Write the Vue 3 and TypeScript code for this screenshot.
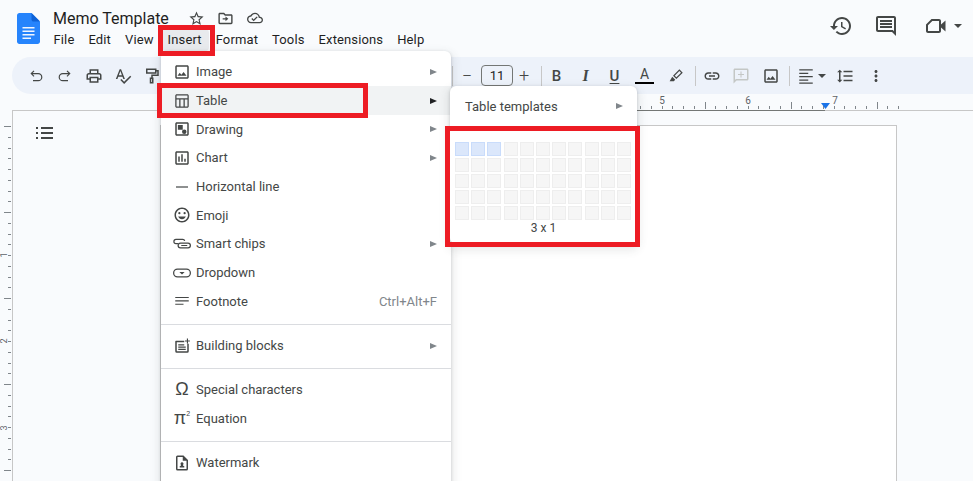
<template>
  <div class="docs">
    <header class="topbar">
      <svg class="logo" width="23" height="31" viewBox="0 0 23 31">
        <path d="M14.5 0H2.4C1.1 0 0 1.1 0 2.4v26.2C0 29.9 1.1 31 2.4 31h18.2c1.3 0 2.4-1.1 2.4-2.4V8.5z" fill="#2684fc" />
        <path d="M14.5 0v6.4c0 1.2.9 2.1 2.1 2.1H23z" fill="#0f62d6" />
        <path d="M5.5 14h12v1.5h-12zM5.5 17.5h12V19h-12zM5.5 21h12v1.5h-12zM5.5 24.500h8.500V26H5.500z" fill="#f1f5fe" />
      </svg>
      <div class="titles">
        <div class="title-row">
          <span class="doc-title">Memo Template</span>
          <svg class="ti" viewBox="0 0 24 24"><path :d="icons.star" /></svg>
          <svg class="ti" viewBox="0 0 24 24"><path :d="icons.folder" /></svg>
          <svg class="ti cloud" viewBox="0 0 24 24"><path :d="icons.cloud" /></svg>
        </div>
        <nav class="menubar">
          <span v-for="m in menus" :key="m" class="menubar-item" :class="{ active: m === 'Insert' }">{{ m }}</span>
        </nav>
      </div>
      <div class="top-actions">
        <svg class="action" viewBox="0 0 24 24"><path :d="icons.history" /></svg>
        <svg class="action comment" viewBox="0 0 24 24"><path :d="icons.comment" /></svg>
        <div class="meet">
          <svg class="action" viewBox="0 0 24 24"><path :d="icons.video" /></svg>
          <i class="caret"></i>
        </div>
      </div>
    </header>

    <div class="toolbar">
      <div class="tool-group">
        <svg v-for="t in leftTools" :key="t" class="tool" viewBox="0 0 24 24"><path :d="icons[t]" /></svg>
      </div>
      <div class="tool-group right">
        <span class="sep"></span>
        <span class="size-btn minus">−</span>
        <span class="size-box">11</span>
        <span class="size-btn">+</span>
        <span class="sep s2"></span>
        <span class="fmt bold">B</span>
        <span class="fmt italic">I</span>
        <span class="fmt under">U</span>
        <span class="fmt color">A</span>
        <svg class="tool pen" viewBox="0 0 24 24"><path :d="icons.pen" /></svg>
        <span class="sep s3"></span>
        <svg class="tool first" viewBox="0 0 24 24"><path :d="icons.link" /></svg>
        <svg class="tool muted" viewBox="0 0 24 24"><path :d="icons.addComment" /></svg>
        <svg class="tool wide" viewBox="0 0 24 24"><path :d="icons.image" /></svg>
        <span class="sep s4"></span>
        <svg class="tool first" viewBox="0 0 24 24"><path :d="icons.align" /></svg>
        <i class="caret small"></i>
        <svg class="tool spacing" viewBox="0 0 24 24"><path :d="icons.spacing" /></svg>
        <svg class="tool more" viewBox="0 0 24 24"><path :d="icons.more" /></svg>
      </div>
    </div>

    <svg class="hruler" width="973" height="17" viewBox="0 0 973 17">
      <line
        v-for="t in topTicks"
        :key="t.x"
        :x1="t.x + 0.5"
        :x2="t.x + 0.5"
        :y1="t.big ? 8 : 12"
        y2="15"
        stroke="#80868b"
      />
      <text x="662" y="10">5</text>
      <text x="748" y="10">6</text>
      <text x="835" y="10">7</text>
      <line x1="12" x2="973" y1="16.500" y2="16.500" stroke="#c7c7c7" />
      <line x1="630" x2="825" y1="16.500" y2="16.500" stroke="#747775" />
      <path d="M821 9h9l-4.500 6z" fill="#1a73e8" />
    </svg>

    <div class="workspace">
      <svg class="vruler" width="12" height="370" viewBox="0 0 12 370">
        <line
          v-for="t in sideTicks"
          :key="t.y"
          :x1="t.big ? 4 : 8"
          x2="11"
          :y1="t.y + 0.5"
          :y2="t.y + 0.5"
          stroke="#80868b"
        />
        <text transform="translate(7 144) rotate(-90)">1</text>
        <text transform="translate(7 230) rotate(-90)">2</text>
        <text transform="translate(7 317) rotate(-90)">3</text>
      </svg>
      <div class="canvas">
        <svg class="outline" width="17" height="14" viewBox="0 0 17 14">
          <path d="M0 1h2v2H0zM0 6h2v2H0zM0 11h2v2H0zM5 1h12v2H5zM5 6h12v2H5zM5 11h12v2H5z" fill="#444746" />
        </svg>
        <div class="page"></div>
      </div>
    </div>

    <div class="menu">
      <template v-for="(item, i) in items" :key="i">
        <div v-if="item.divider" class="divider"></div>
        <div v-else class="row" :class="{ hover: item.label === 'Table' }">
          <span v-if="item.glyph" class="glyph" :class="item.glyphClass">{{ item.glyph }}<sup v-if="item.glyphClass === 'pi'">2</sup></span>
          <svg v-else class="row-icon" viewBox="0 0 24 24"><path :d="icons[item.icon ?? '']" fill-rule="evenodd" /></svg>
          <span class="label">{{ item.label }}</span>
          <span v-if="item.shortcut" class="shortcut">{{ item.shortcut }}</span>
          <i v-if="item.sub" class="arrow"></i>
        </div>
      </template>
    </div>

    <div class="submenu">
      <div class="row templates">
        <span class="label">Table templates</span>
        <i class="arrow"></i>
      </div>
      <div class="grid">
        <span v-for="n in 55" :key="n" class="cell" :class="{ on: n <= 3 }"></span>
      </div>
      <div class="grid-size">3 x 1</div>
    </div>

    <div class="mark mark-insert"></div>
    <div class="mark mark-table"></div>
    <div class="mark mark-grid"></div>
  </div>
</template>

<script setup lang="ts">
interface MenuItem {
  label?: string
  icon?: string
  glyph?: string
  glyphClass?: string
  shortcut?: string
  sub?: boolean
  divider?: boolean
}

const menus = ['File', 'Edit', 'View', 'Insert', 'Format', 'Tools', 'Extensions', 'Help']
const leftTools = ['undo', 'redo', 'print', 'spell', 'paint']

const icons: Record<string, string> = {
  star: 'M22 9.24l-7.19-.62L12 2 9.190 8.630 2 9.240l5.460 4.730L5.820 21 12 17.270 18.180 21l-1.630-7.030L22 9.240zM12 15.400l-3.760 2.270 1-4.280-3.320-2.880 4.380-.380L12 6.100l1.710 4.040 4.380.380-3.320 2.880 1 4.280L12 15.400z',
  folder: 'M20 6h-8l-2-2H4c-1.100 0-2 .9-2 2v12c0 1.100.9 2 2 2h16c1.100 0 2-.9 2-2V8c0-1.100-.9-2-2-2zm0 12H4V6h5.170l2 2H20v10zM12 11.500H8v2h4V16l4-3.500L12 9z',
  cloud: 'M19.350 10.040C18.670 6.590 15.640 4 12 4 9.110 4 6.600 5.640 5.350 8.040 2.340 8.360 0 10.910 0 14c0 3.310 2.690 6 6 6h13c2.760 0 5-2.240 5-5 0-2.640-2.050-4.780-4.650-4.960zM19 18H6c-2.210 0-4-1.790-4-4 0-2.050 1.530-3.760 3.560-3.970l1.070-.11.5-.95C8.080 7.140 9.940 6 12 6c2.620 0 4.880 1.860 5.390 4.430l.3 1.500 1.530.11c1.560.1 2.780 1.410 2.780 2.960 0 1.650-1.350 3-3 3zm-9-3.820l-2.090-2.090L6.500 13.500 10 17l6.010-6.010-1.410-1.410z',
  history: 'M13 3c-4.970 0-9 4.030-9 9H1l3.890 3.890.07.14L9 12H6c0-3.870 3.130-7 7-7s7 3.130 7 7-3.130 7-7 7c-1.930 0-3.680-.79-4.940-2.060l-1.420 1.420C8.270 19.990 10.510 21 13 21c4.970 0 9-4.030 9-9s-4.030-9-9-9zm-1 5v5l4.280 2.540.72-1.210-3.500-2.080V8H12z',
  comment: 'M21.990 4c0-1.100-.89-2-1.990-2H4c-1.100 0-2 .9-2 2v12c0 1.100.9 2 2 2h14l4 4-.01-18zM20 4v13.170L18.830 16H4V4h16zM6 12h12v2H6zm0-3h12v2H6zm0-3h12v2H6z',
  video: 'M7.500 5H15c1.100 0 2 .9 2 2v3.500l4.500-4v11l-4.500-4V17c0 1.100-.9 2-2 2H4c-1.100 0-2-.9-2-2v-6.500zM8.300 7L4 11.300V17h11V7z',
  undo: 'M8.800 4.600l1.100 1.100L7.600 8H15a5.500 5.500 0 0 1 0 11H8v-1.600h7a3.900 3.900 0 0 0 0-7.800H7.600l2.300 2.300-1.100 1.100L4.600 8.800z',
  redo: 'M15.200 4.600l-1.100 1.100L16.400 8H9a5.500 5.500 0 0 0 0 11h7v-1.600H9a3.900 3.900 0 0 1 0-7.800h7.400l-2.300 2.300 1.100 1.100 4.200-4.200z',
  print: 'M19 8h-1V3H6v5H5c-1.660 0-3 1.340-3 3v6h4v4h12v-4h4v-6c0-1.660-1.340-3-3-3zM8 5h8v3H8V5zm8 12v2H8v-4h8v2zm2-2v-2H6v2H4v-4c0-.55.45-1 1-1h14c.55 0 1 .45 1 1v4h-2z',
  spell: 'M12.450 16h2.090L9.430 3H7.570L2.460 16h2.090l1.120-3h5.640l1.140 3zm-6.020-5L8.500 5.480 10.570 11H6.430zm15.160.59l-8.090 8.090L9.830 16l-1.410 1.410 5.090 5.090L23 13l-1.410-1.410z',
  paint: 'M4 2h14v2h3v8h-8v2h1v8H9v-8h2v-4h8V6h-1v3H4zM6 4v3h10V4zM11 16v4h1v-4z',
  pen: 'M16.500 3l4.500 4.500-8.500 8.500-4.500-4.500zM16.500 5.300L10.300 11.500l2.200 2.200 6.200-6.200zM7 13l4 4-2 2H3.500z',
  link: 'M3.900 12c0-1.710 1.390-3.100 3.100-3.100h4V7H7c-2.760 0-5 2.240-5 5s2.240 5 5 5h4v-1.900H7c-1.710 0-3.100-1.390-3.100-3.100zM8 13h8v-2H8v2zm9-6h-4v1.900h4c1.710 0 3.100 1.390 3.100 3.100s-1.390 3.100-3.100 3.100h-4V17h4c2.760 0 5-2.240 5-5s-2.240-5-5-5z',
  addComment: 'M20 2H4c-1.100 0-2 .9-2 2v18l4-4h14c1.100 0 2-.9 2-2V4c0-1.100-.9-2-2-2zm0 14H5.170L4 17.170V4h16v12zM11.300 6h1.400v3.300H16v1.400h-3.300V14h-1.400v-3.300H8V9.300h3.300z',
  image: 'M19 5v14H5V5h14m0-2H5c-1.100 0-2 .9-2 2v14c0 1.100.9 2 2 2h14c1.100 0 2-.9 2-2V5c0-1.100-.9-2-2-2zm-4.860 8.860l-3 3.870L9 13.140 6 17h12l-3.860-5.140z',
  align: 'M3 3h18v1.800H3zM3 7.500h12v1.800H3zM3 12h18v1.800H3zM3 16.500h12v1.800H3zM3 20.500h18v1.800H3z',
  spacing: 'M6 7h2.500L5 3.500 1.500 7H4v10H1.500L5 20.500 8.500 17H6V7zm4-2v2h12V5H10zm0 14h12v-2H10v2zm0-6h12v-2H10v2z',
  more: 'M12 8c1.100 0 2-.9 2-2s-.9-2-2-2-2 .9-2 2 .9 2 2 2zm0 2c-1.100 0-2 .9-2 2s.9 2 2 2 2-.9 2-2-.9-2-2-2zm0 6c-1.100 0-2 .9-2 2s.9 2 2 2 2-.9 2-2-.9-2-2-2z',
  table: 'M5 3h14c1.100 0 2 .9 2 2v14c0 1.100-.9 2-2 2H5c-1.100 0-2-.9-2-2V5c0-1.100.9-2 2-2zm0 1.700c-.2 0-.3.1-.3.3v3.300h14.600V5c0-.2-.1-.3-.3-.3zM4.700 10v9c0 .2.1.3.3.3h3.300V10zm5.300 0v9.300h4V10zm5.700 0v9.300H19c.2 0 .3-.1.3-.3v-9z',
  drawing: 'M5 3h14c1.100 0 2 .9 2 2v14c0 1.100-.9 2-2 2H5c-1.100 0-2-.9-2-2V5c0-1.100.9-2 2-2zm0 2v14h14V5zm1.500 1.500H13V13H6.500zM15 12.500a3 3 0 1 1 0 6 3 3 0 0 1 0-6z',
  chart: 'M19 3H5c-1.100 0-2 .9-2 2v14c0 1.100.9 2 2 2h14c1.100 0 2-.9 2-2V5c0-1.100-.9-2-2-2zm0 16H5V5h14v14zM7 10h2v7H7zM11 7h2v10h-2zM15 13h2v4h-2z',
  hline: 'M4 11.200h16v1.600H4z',
  emoji: 'M11.990 2C6.470 2 2 6.480 2 12s4.470 10 9.990 10C17.520 22 22 17.520 22 12S17.520 2 11.990 2zM12 20c-4.420 0-8-3.580-8-8s3.580-8 8-8 8 3.580 8 8-3.580 8-8 8zM8.500 8a1.500 1.500 0 1 1 0 3 1.500 1.500 0 0 1 0-3zM15.500 8a1.500 1.500 0 1 1 0 3 1.500 1.500 0 0 1 0-3zM12 17.500c2.330 0 4.300-1.460 5.110-3.500H6.890c.8 2.040 2.780 3.500 5.110 3.500z',
  chips: 'M4 5h9a3.500 3.500 0 0 1 3.400 2.700l-1.600.3A1.900 1.900 0 0 0 13 6.600H4a2 2 0 0 0 0 4h3v1.600H4a3.600 3.600 0 0 1 0-7.200zM10 10h10a4 4 0 0 1 0 8H10a4 4 0 0 1 0-8zm0 1.700a2.300 2.300 0 0 0 0 4.600h10a2.300 2.300 0 0 0 0-4.600zM11 13.200h8v1.600h-8z',
  dropdown: 'M6 6h12a6 6 0 0 1 0 12H6A6 6 0 0 1 6 6zm0 1.700a4.300 4.300 0 0 0 0 8.600h12a4.300 4.300 0 0 0 0-8.600zM8.500 10.500h7L12 14z',
  footnote: 'M3 6.500h18v1.600H3zM3 11h18v1.600H3zM3 15.500h11v1.600H3z',
  blocks: 'M4 5h11v2H5v12h14V9h2v10a2 2 0 0 1-2 2H5a2 2 0 0 1-2-2V6a1 1 0 0 1 1-1zM7 9.500h8v1.700H7zM7 12.500h10v1.700H7zM7 15.500h10v1.700H7zM18.500 2h1.500v2.500h2.500V6H20v2.500h-1.500V6H16V4.500h2.500z',
  watermark: 'M6 2h8l6 6v12a2 2 0 0 1-2 2H6a2 2 0 0 1-2-2V4a2 2 0 0 1 2-2zm0 2v16h12V9h-5V4zM12 11a2 2 0 0 1 1.200 3.600l.8 1.400h1v2H9v-2h1l.8-1.400A2 2 0 0 1 12 11z',
}

const items: MenuItem[] = [
  { label: 'Image', icon: 'image', sub: true },
  { label: 'Table', icon: 'table', sub: true },
  { label: 'Drawing', icon: 'drawing', sub: true },
  { label: 'Chart', icon: 'chart', sub: true },
  { label: 'Horizontal line', icon: 'hline' },
  { label: 'Emoji', icon: 'emoji' },
  { label: 'Smart chips', icon: 'chips', sub: true },
  { label: 'Dropdown', icon: 'dropdown' },
  { label: 'Footnote', icon: 'footnote', shortcut: 'Ctrl+Alt+F' },
  { divider: true },
  { label: 'Building blocks', icon: 'blocks', sub: true },
  { divider: true },
  { label: 'Special characters', glyph: 'Ω', glyphClass: 'omega' },
  { label: 'Equation', glyph: 'π', glyphClass: 'pi' },
  { divider: true },
  { label: 'Watermark', icon: 'watermark' },
]

// ruler ticks sit 1/8 inch apart, 86px to the inch
const topTicks = Array.from({ length: 25 }, (_, i) => ({
  x: Math.round(640 + i * 10.75),
  big: (i + 2) % 8 === 0,
}))
const sideTicks = Array.from({ length: 35 }, (_, i) => ({
  y: Math.round(15 + i * 10.75),
  big: i % 8 === 0,
}))
</script>

<style>
html,
body {
  margin: 0;
  background: #f9fbfd;
}
</style>

<style scoped>
.docs {
  position: relative;
  width: 973px;
  height: 481px;
  overflow: hidden;
  display: flex;
  flex-direction: column;
  background: #f9fbfd;
  color: #444746;
  font-family: Roboto, "Liberation Sans", sans-serif;
  font-size: 13px;
}

.topbar {
  flex: none;
  height: 57px;
  display: flex;
  box-sizing: border-box;
  padding: 13px 0 0 17px;
}

.logo {
  flex: none;
}

.titles {
  margin-left: 13px;
  margin-top: -8px;
}

.title-row {
  display: flex;
  align-items: center;
  height: 26px;
  gap: 12px;
}

.doc-title {
  font-size: 16px;
  color: #1f1f1f;
  margin-right: 7.500px;
}

.ti {
  width: 17px;
  height: 17px;
  fill: #444746;
}

.cloud {
  width: 16px;
  height: 16px;
  margin-left: 1px;
}

.menubar {
  display: flex;
  margin-left: -6.500px;
  margin-top: -2px;
}

.menubar-item {
  padding: 3px 7px 4px;
  line-height: 15px;
  letter-spacing: 0.13px;
  border-radius: 4px;
  color: #1f1f1f;
}

.menubar-item.active {
  background: #e8eaed;
}

.top-actions {
  margin-left: auto;
  display: flex;
  align-items: flex-start;
  padding-top: 1px;
  gap: 21px;
  padding-right: 11px;
}

.action {
  width: 24px;
  height: 24px;
  fill: #444746;
}

.comment {
  margin-right: 5px;
}

.meet {
  display: flex;
  align-items: center;
  gap: 6px;
}

.caret {
  display: block;
  width: 0;
  height: 0;
  border: 4px solid transparent;
  border-top-color: #444746;
  border-bottom: 0;
}

.toolbar {
  flex: none;
  height: 37px;
  margin-left: 12px;
  margin-right: -30px;
  background: #edf2fa;
  border-radius: 24px;
  display: flex;
  align-items: center;
}

.tool-group {
  display: flex;
  align-items: center;
  padding-left: 15px;
  gap: 11px;
}

.tool-group.right {
  padding-left: 291px;
  gap: 0;
}

.tool {
  flex: none;
  width: 18px;
  height: 18px;
  fill: #444746;
  fill-rule: evenodd;
}

.right .tool {
  margin-left: 11px;
}

.right .tool.first {
  margin-left: 7px;
}

.right .tool.wide {
  margin-left: 12px;
}

.right .tool.pen {
  margin-left: 8px;
}

.right .tool.spacing {
  margin-left: 10px;
}

.right .tool.more {
  margin-left: 13px;
}

.muted {
  fill: #c4c7c5;
}

.sep {
  width: 1px;
  height: 20px;
  background: #c7c7c7;
}

.s2 {
  margin-left: 7px;
}

.s3 {
  margin-left: 10px;
}

.s4 {
  margin-left: 9px;
}

.size-btn {
  width: 20px;
  text-align: center;
  font-size: 18px;
  font-weight: 300;
}

.minus {
  margin-left: 4px;
}

.size-box {
  box-sizing: border-box;
  width: 32px;
  height: 21px;
  line-height: 19px;
  margin: 0 1px 0 4px;
  text-align: center;
  border: 1px solid #747775;
  border-radius: 4px;
  color: #1f1f1f;
}

.fmt {
  width: 29px;
  text-align: center;
  font-size: 15px;
  line-height: 20px;
}

.bold {
  font-weight: 500;
}

.italic {
  font-family: "Liberation Serif", serif;
  font-style: italic;
  font-weight: 700;
  font-size: 16px;
}

.under {
  font-weight: 500;
  text-decoration: underline;
  text-underline-offset: 2px;
}

.color {
  margin-left: 1px;
  font-size: 14px;
  line-height: 15px;
}

.color::after {
  content: "";
  display: block;
  width: 19px;
  height: 2.500px;
  margin: 0 auto;
  background: #000;
}

.caret.small {
  margin-left: 3px;
}

.hruler {
  flex: none;
  display: block;
}

.hruler text,
.vruler text {
  font-size: 10px;
  fill: #5f6368;
  text-anchor: middle;
}

.vruler text {
  font-size: 9px;
}

.workspace {
  flex: 1;
  display: flex;
  min-height: 0;
}

.vruler {
  flex: none;
  display: block;
}

.canvas {
  flex: 1;
  display: flex;
  align-items: flex-start;
  border-left: 1px solid #c7c7c7;
  padding: 14px 0 0 23px;
}

.outline {
  flex: none;
  margin-top: 1px;
}

.page {
  margin-left: 107px;
  width: 737px;
  height: 400px;
  background: #fff;
  border: 1px solid #c7c7c7;
  border-bottom: 0;
  box-sizing: border-box;
}

.menu {
  position: absolute;
  left: 161px;
  top: 51px;
  width: 290px;
  height: 460px;
  box-sizing: border-box;
  padding-top: 6.500px;
  background: #fff;
  border-radius: 6px 6px 0 0;
  box-shadow: 0 1px 3px rgba(60, 64, 67, 0.25), 0 4px 8px 3px rgba(60, 64, 67, 0.1);
}

.row {
  display: flex;
  align-items: center;
  height: 28.700px;
  padding: 0 14px 0 12px;
}

.row.hover {
  background: #f1f3f4;
}

.row-icon {
  flex: none;
  width: 18px;
  height: 18px;
  margin-right: 5px;
  fill: #444746;
}

.glyph {
  flex: none;
  width: 18px;
  margin-right: 5px;
  text-align: center;
  color: #444746;
  font-family: "Liberation Sans", sans-serif;
  font-size: 18px;
}

.glyph sup {
  font-size: 7px;
  vertical-align: 8px;
  line-height: 0;
}

.label {
  color: #444746;
  white-space: nowrap;
}

.shortcut {
  margin-left: auto;
  color: #80868b;
}

.arrow {
  display: block;
  margin-left: auto;
  width: 0;
  height: 0;
  border-left: 7px solid #80868b;
  border-top: 3.500px solid transparent;
  border-bottom: 3.500px solid transparent;
}

.hover .arrow {
  border-left-color: #202124;
}

.divider {
  height: 1px;
  margin: 8.300px 0 6.200px;
  background: #dadce0;
}

.submenu {
  position: absolute;
  left: 450px;
  top: 86px;
  width: 187px;
  height: 158px;
  background: #fff;
  border-radius: 6px;
  box-shadow: 0 1px 3px rgba(60, 64, 67, 0.25), 0 4px 8px 3px rgba(60, 64, 67, 0.1);
  padding-top: 6px;
  box-sizing: border-box;
}

.templates {
  padding: 0 14px 0 15px;
}

.grid {
  display: grid;
  grid-template-columns: repeat(11, 14px);
  grid-auto-rows: 14px;
  gap: 2.200px;
  margin: 21px 0 0 5px;
}

.cell {
  box-sizing: border-box;
  background: #f6f6f6;
  border: 1px solid #eeeeee;
}

.cell.on {
  background: #dbe7fb;
  border-color: #c9dcfb;
}

.grid-size {
  text-align: center;
  font-size: 12px;
  color: #444746;
  line-height: 16px;
}

.mark {
  position: absolute;
  box-sizing: border-box;
  border: 5px solid #ed1c24;
  pointer-events: none;
}

.mark-insert {
  left: 158px;
  top: 25px;
  width: 57px;
  height: 31px;
}

.mark-table {
  left: 157px;
  top: 83px;
  width: 211px;
  height: 35px;
}

.mark-grid {
  left: 445px;
  top: 126px;
  width: 195px;
  height: 121px;
}
</style>
